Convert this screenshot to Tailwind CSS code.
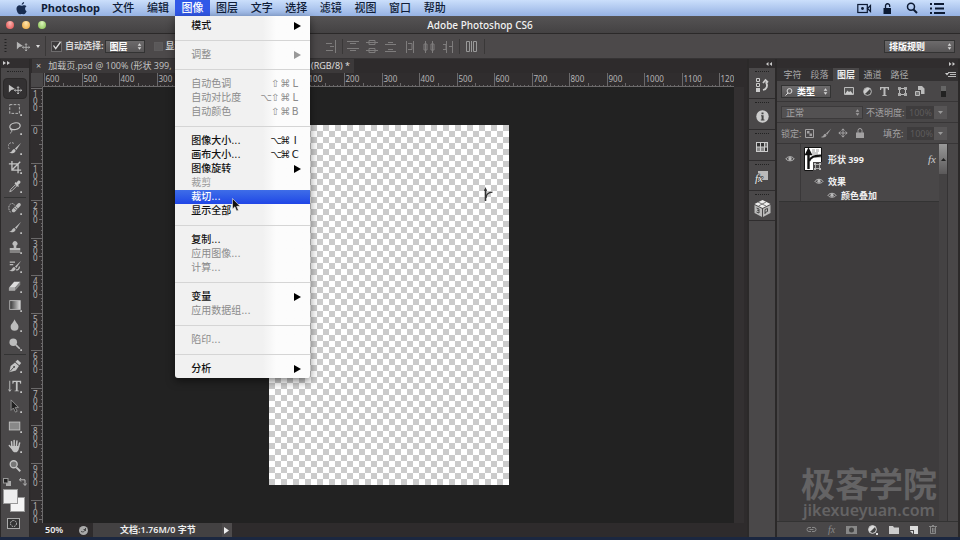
<!DOCTYPE html>
<html lang="zh-CN">
<head>
<meta charset="utf-8">
<meta name="viewport" content="width=device-width, initial-scale=1">
<title>Adobe Photoshop CS6</title>
<script src="https://cdn.jsdelivr.net/npm/@tailwindcss/browser@4"></script>
</head>
<body class="bg-[#222] overflow-hidden">
<svg class="hidden" aria-hidden="true">
  <symbol id="updown" viewBox="0 0 6 10"><path d="M3 1 5.200 4H.8zM3 9 .8 6h4.400z" fill="currentColor"/></symbol>
  <symbol id="eye" viewBox="0 0 12 10"><path d="M1 5.500C3 2 9 2 11 5.500 9 8.500 3 8.500 1 5.500z" fill="none" stroke="currentColor" stroke-width="1.200"/><circle cx="6" cy="5.200" r="2" fill="currentColor"/></symbol>
  <symbol id="move" viewBox="0 0 16 16"><path d="M1 3v9l2.800-2.800L8 8z" fill="currentColor"/><path d="M11.500 5.500v8M7.500 9.500h8M10.300 6.700l1.200-1.400 1.200 1.400M10.300 12.300l1.200 1.400 1.200-1.400M8.700 8.300 7.300 9.500l1.400 1.200M14.300 8.300l1.400 1.200-1.400 1.200" fill="none" stroke="currentColor"/></symbol>
  <symbol id="brush" viewBox="0 0 16 16"><path d="M15 2 8 8.500l1.500 1.800z" fill="currentColor"/><path d="M7.300 9c-2 .2-2.300 1.600-3 2.700-.6 1-1.800 1.400-3.300 1.500 3 1.300 6.500 1 7.800-2.200z" fill="currentColor"/></symbol>
  <symbol id="lens" viewBox="0 0 16 16"><circle cx="6.500" cy="6" r="4" fill="#777" stroke="currentColor" stroke-width="1.500"/><path d="m9.500 9.500 4.500 4.500" stroke="currentColor" stroke-width="2.200"/></symbol>
</svg>

<div class="flex min-h-screen flex-col text-[10px] leading-3 text-[#d8d8d8] [font-family:'Noto_Sans','Noto_Sans_CJK_SC',sans-serif]">

  <!-- System menu bar -->
  <header class="relative z-20 flex h-4 items-center bg-linear-to-b from-[#cbdffb] to-[#96b2e3] text-[11px] leading-4 text-[#101d38]">
    <button class="ml-[15px] flex w-[26px]" aria-label="Apple"><svg class="size-[13px]" viewBox="0 0 14 14" fill="#182c50"><path d="M9.800 0c.1 1.600-1.200 2.900-2.600 2.900C7.100 1.500 8.400.1 9.800 0zM12.500 10c-.6 1.500-1.700 3.300-2.900 3.300-.8 0-1.200-.5-2.200-.5s-1.400.5-2.200.5C3.500 13.300 1.600 10 1.600 7.400c0-2.500 1.600-3.900 3.200-3.900 1 0 1.800.6 2.500.6s1.600-.7 2.800-.7c.8 0 1.700.4 2.300 1.200-2.100 1.200-1.800 4.300.1 5.400z"/></svg></button>
    <button class="w-[65px] text-left font-bold">Photoshop</button>
    <nav class="flex w-[346px] font-medium">
      <button class="flex-1">文件</button>
      <button class="flex-1">编辑</button>
      <div class="relative flex-1">
        <button class="w-full bg-[#3158e8] text-white" aria-expanded="true">图像</button>
        <!-- Open drop-down -->
        <div class="absolute left-0 top-4 flex w-[135px] flex-col rounded-b-[3px] bg-linear-to-r from-[#f1f1f1] from-65% to-[#fcfcfc] to-75% pt-[3px] pb-[2px] text-[10px] leading-[14px] text-[#111] shadow-[0_3px_8px_rgba(0,0,0,0.5)] [font-family:'DejaVu_Sans','Noto_Sans_CJK_SC',sans-serif]" role="menu">
          <button role="menuitem" class="flex h-[14px] items-center justify-between pl-4 pr-[9px] font-medium"><span>模式</span><svg class="h-2 w-[7px]" viewBox="0 0 7 8"><path d="M0 0 7 4 0 8z"/></svg></button>
          <hr class="my-[7px] border-[#d5d5d5]">
          <button role="menuitem" disabled class="flex h-[14px] items-center justify-between pl-4 pr-[9px] font-normal text-[#8b8b8b]"><span>调整</span><svg class="h-2 w-[7px]" viewBox="0 0 7 8" fill="#999"><path d="M0 0 7 4 0 8z"/></svg></button>
          <hr class="my-[7px] border-[#d5d5d5]">
          <button role="menuitem" disabled class="flex h-[14px] items-center justify-between pl-4 pr-[10px] font-normal text-[#8b8b8b]"><span>自动色调</span><kbd class="grid grid-flow-col auto-cols-[10px] font-[inherit]"><span>⇧</span><span>⌘</span><span>L</span></kbd></button>
          <button role="menuitem" disabled class="flex h-[14px] items-center justify-between pl-4 pr-[10px] font-normal text-[#8b8b8b]"><span>自动对比度</span><kbd class="grid grid-flow-col auto-cols-[10px] font-[inherit]"><span>⌥</span><span>⇧</span><span>⌘</span><span>L</span></kbd></button>
          <button role="menuitem" disabled class="flex h-[14px] items-center justify-between pl-4 pr-[10px] font-normal text-[#8b8b8b]"><span>自动颜色</span><kbd class="grid grid-flow-col auto-cols-[10px] font-[inherit]"><span>⇧</span><span>⌘</span><span>B</span></kbd></button>
          <hr class="my-[7px] border-[#d5d5d5]">
          <button role="menuitem" class="flex h-[14px] items-center justify-between pl-4 pr-[10px] font-medium"><span>图像大小...</span><kbd class="grid grid-flow-col auto-cols-[10px] font-[inherit]"><span>⌥</span><span>⌘</span><span>I</span></kbd></button>
          <button role="menuitem" class="flex h-[14px] items-center justify-between pl-4 pr-[10px] font-medium"><span>画布大小...</span><kbd class="grid grid-flow-col auto-cols-[10px] font-[inherit]"><span>⌥</span><span>⌘</span><span>C</span></kbd></button>
          <button role="menuitem" class="flex h-[14px] items-center justify-between pl-4 pr-[9px] font-medium"><span>图像旋转</span><svg class="h-2 w-[7px]" viewBox="0 0 7 8"><path d="M0 0 7 4 0 8z"/></svg></button>
          <button role="menuitem" disabled class="h-[14px] pl-4 text-left font-normal text-[#9b9b9b]">裁剪</button>
          <button role="menuitem" class="h-[14px] bg-linear-to-b from-[#3f6de8] to-[#2145e6] pl-4 text-left text-white">裁切...</button>
          <button role="menuitem" class="h-[14px] pl-4 text-left font-medium">显示全部</button>
          <hr class="my-[7px] border-[#d5d5d5]">
          <button role="menuitem" class="h-[14px] pl-4 text-left font-medium">复制...</button>
          <button role="menuitem" disabled class="h-[14px] pl-4 text-left font-normal text-[#8b8b8b]">应用图像...</button>
          <button role="menuitem" disabled class="h-[14px] pl-4 text-left font-normal text-[#8b8b8b]">计算...</button>
          <hr class="my-[7px] border-[#d5d5d5]">
          <button role="menuitem" class="flex h-[14px] items-center justify-between pl-4 pr-[9px] font-medium"><span>变量</span><svg class="h-2 w-[7px]" viewBox="0 0 7 8"><path d="M0 0 7 4 0 8z"/></svg></button>
          <button role="menuitem" disabled class="h-[14px] pl-4 text-left font-normal text-[#8b8b8b]">应用数据组...</button>
          <hr class="my-[7px] border-[#d5d5d5]">
          <button role="menuitem" disabled class="h-[14px] pl-4 text-left font-normal text-[#8b8b8b]">陷印...</button>
          <hr class="my-[7px] border-[#d5d5d5]">
          <button role="menuitem" class="flex h-[14px] items-center justify-between pl-4 pr-[9px] font-medium"><span>分析</span><svg class="h-2 w-[7px]" viewBox="0 0 7 8"><path d="M0 0 7 4 0 8z"/></svg></button>
          <svg class="absolute left-[57px] top-[182px] h-[14px] w-[9px]" viewBox="0 0 9 14"><path d="M.5.500v10.500l2.400-2.200L4.600 13l1.800-.8L4.700 8.300h3.400z" fill="#111" stroke="#eee" stroke-width=".6"/></svg>
        </div>
      </div>
      <button class="flex-1">图层</button>
      <button class="flex-1">文字</button>
      <button class="flex-1">选择</button>
      <button class="flex-1">滤镜</button>
      <button class="flex-1">视图</button>
      <button class="flex-1">窗口</button>
      <button class="flex-1">帮助</button>
    </nav>
    <div class="ml-auto mr-[14px] flex items-center gap-[11px]">
      <button aria-label="录屏"><svg class="block h-[11px] w-[15px]" viewBox="0 0 15 11" fill="none" stroke="#0c1a33" stroke-width="1.200"><rect x=".8" y="1.500" width="9.500" height="8"/><circle cx="5.500" cy="5.500" r="1.400" fill="#0c1a33" stroke="none"/><path d="m10.500 5.500 3-3v6z"/></svg></button>
      <button aria-label="锁定"><svg class="block h-[11px] w-[9px]" viewBox="0 0 9 11"><rect x=".5" y="5" width="7.500" height="6" fill="#0c1a33"/><path d="M2.500 5V3a2 2 0 0 1 4.200-.3V4" fill="none" stroke="#0c1a33" stroke-width="1.300"/></svg></button>
      <button class="ml-[3px]" aria-label="搜索"><svg class="block size-[12px]" viewBox="0 0 12 12" fill="none" stroke="#0c1a33"><circle cx="5" cy="4.800" r="3.500" stroke-width="1.500"/><path d="m7.500 7.500 3.500 3.500" stroke-width="2"/></svg></button>
      <button aria-label="通知中心"><svg class="block h-[11px] w-[17px]" viewBox="0 0 17 11" fill="#0c1a33"><path d="M1 0h2v2H1zM5 0h10v2H5zM1 4.500h2v2H1zM6 4.500h9v2H6zM1 9h2v2H1zM5 9h11v2H5z"/></svg></button>
    </div>
  </header>

  <!-- Window title -->
  <div class="flex h-[18px] items-center border-b border-[#2b2929] bg-linear-to-b from-[#555354] to-[#444243] px-[6px]">
    <div class="flex flex-1 gap-2">
      <button aria-label="关闭" class="size-[8px] rounded-full bg-radial-[at_50%_25%] from-[#fbb9b4] to-[#e04848]"></button>
      <button aria-label="最小化" class="size-[8px] rounded-full bg-radial-[at_50%_25%] from-[#fde5b0] to-[#eda232]"></button>
      <button aria-label="缩放" class="size-[8px] rounded-full bg-radial-[at_50%_25%] from-[#dff5c0] to-[#7dbd45]"></button>
    </div>
    <h1 class="text-[10px] font-medium text-[#f2f2f2]">Adobe Photoshop CS6</h1>
    <div class="flex-1"></div>
  </div>

  <!-- Options bar -->
  <div class="flex h-[25px] items-center border-b border-[#353334] bg-[#4c494a] text-[9px] font-bold">
    <svg class="ml-1 h-[14px] w-[3px]" viewBox="0 0 3 14"><path d="M1.500 0v14" stroke="#222" stroke-width="2" stroke-dasharray="1 2"/></svg>
    <button class="ml-[9px] flex h-5 items-center gap-[6px] border-r border-[#3a3838] pr-[5px]" aria-label="移动工具"><svg class="size-[14px] text-[#b5b5b5]"><use href="#move"/></svg><svg class="h-[3px] w-[4px]" viewBox="0 0 4 3"><path d="M0 0h4L2 3z" fill="#ddd"/></svg></button>
    <label class="ml-[5px] flex items-center gap-[3px]"><input type="checkbox" checked class="peer sr-only"><svg class="size-[11px]" viewBox="0 0 11 11"><rect x=".5" y=".5" width="10" height="10" fill="#3c3a3b" stroke="#6e6c6d"/><path d="m2.500 4.500 2.200 3.200L9.500 1" fill="none" stroke="#ddd" stroke-width="1.300"/></svg><span>自动选择:</span></label>
    <div class="relative ml-[1px]">
      <select aria-label="自动选择" class="block h-[13px] w-[40px] appearance-none border border-[#333] bg-linear-to-b from-[#6d6b6c] to-[#575556] pl-1 text-[9px] leading-[11px] text-white"><option>图层</option></select>
      <svg class="pointer-events-none absolute right-[3px] top-[2px] h-[9px] w-[5px]"><use href="#updown"/></svg>
    </div>
    <label class="ml-[9px] flex w-[160px] items-center gap-[3px] overflow-hidden whitespace-nowrap"><input type="checkbox" class="size-[9px] shrink-0 appearance-none border border-[#5d5b5c] bg-[#5a5859]">显示变换控件</label>
    <svg class="ml-[12px] h-[15px] w-[160px]" viewBox="323 0 160 15" fill="none" stroke="#7e7c7c">
      <path d="M332.500 1v13M322 4.500h7M322 11.500h8M327 7.500h4"/>
      <path d="M339.500 0v15M456.500 0v15M481.500 0v15" stroke="#3a3838"/>
      <path d="M344 2.500h12M347 4.500h6M344 9.500h12M347 11.500h6M363 3.500h12M366 1.500h6v4h-6zM363 11.500h12M366 9.500h6v4h-6zM382 5.500h11M385 3.500h5M382 12.500h11M385 10.500h5"/>
      <path d="M403.500 2v12M405 4.500h4v6h-4M410.500 2v12M422.500 2v12M421 5h3v6h-3zM429.500 2v12M428 5h3v6h-3zM443.500 2v12M440 5.500h3v5h-3M449.500 2v12M446 7.500h3"/>
      <path d="M463.500 2.500h3v10h-3zM468.500 2v11M470.500 2.500h3v10h-3z" stroke="#999"/>
    </svg>
    <div class="relative ml-auto mr-[5px]">
      <select aria-label="工作区" class="block h-[13px] w-[71px] appearance-none border border-[#333] bg-linear-to-b from-[#6d6b6c] to-[#575556] pl-1 text-[9px] leading-[11px] text-white"><option>排版规则</option></select>
      <svg class="pointer-events-none absolute right-[3px] top-[2px] h-[9px] w-[5px]"><use href="#updown"/></svg>
    </div>
  </div>

  <main class="flex min-h-0 flex-1 bg-[#2e2b2c]">
    <!-- Tool palette -->
    <aside class="flex w-[30px] flex-col border-x border-[#2b2929] bg-[#4a4849]">
      <div class="h-[9px] bg-[#312e2f] pl-[2px] pt-[2px]"><svg class="h-1 w-[7px]" viewBox="0 0 7 4" fill="#ccc"><path d="M0 0l3 2-3 2zM4 0l3 2-3 2z"/></svg></div>
      <div class="mx-[6px] mt-[3px] mb-[6px] border-t border-dotted border-[#222]"></div>
      <div class="flex h-[118px] flex-col text-[#c4c4c4]">
        <button aria-label="移动" class="mx-[2px] flex flex-1 items-center justify-center rounded-sm border border-[#2b2929] bg-[#333132]"><svg class="size-[14px]"><use href="#move"/></svg></button>
        <button aria-label="选框" class="flex flex-1 items-center justify-center"><svg class="size-[14px]" viewBox="0 0 16 16"><rect x="2" y="3" width="11" height="10" fill="none" stroke="currentColor" stroke-dasharray="3 1.500"/><path d="M14 14h2v2h-2z" fill="currentColor"/></svg></button>
        <button aria-label="套索" class="flex flex-1 items-center justify-center"><svg class="size-[14px]" viewBox="0 0 16 16"><ellipse cx="8" cy="6" rx="6" ry="3.800" transform="rotate(-12 8 6)" fill="none" stroke="currentColor" stroke-width="1.400"/><path d="M3.500 8.500c-1.500 1-.5 2.500 1 1.800M4 10c1 1.500 0 3-1.500 4" fill="none" stroke="currentColor"/><path d="M14 14h2v2h-2z" fill="currentColor"/></svg></button>
        <button aria-label="快速选择" class="flex flex-1 items-center justify-center"><svg class="size-[14px]" viewBox="0 0 16 16"><use href="#brush"/><path d="M1.500 9a4 4 0 0 1 5.500-6" fill="none" stroke="currentColor" stroke-dasharray="2 1.300"/><path d="M14 14h2v2h-2z" fill="currentColor"/></svg></button>
        <button aria-label="裁剪" class="flex flex-1 items-center justify-center"><svg class="size-[14px]" viewBox="0 0 16 16"><path d="M4.500 1v10.500H15M1 4.500h10.500V15M4.500 11.500 14 2" fill="none" stroke="currentColor" stroke-width="1.500"/><path d="M14 14h2v2h-2z" fill="currentColor"/></svg></button>
        <button aria-label="吸管" class="flex flex-1 items-center justify-center"><svg class="size-[14px]" viewBox="0 0 16 16"><path d="M2 14.500 3 12l5.500-5.500 1.500 1.500L4.500 13.500z" fill="none" stroke="currentColor"/><path d="m7.500 5 4 4 1-1-1-1.200L14 4.500c1.200-1.700-1.300-3.500-2.700-2.200L9.500 4.200 8.500 3.500z" fill="currentColor"/><path d="M14 14h2v2h-2z" fill="currentColor"/></svg></button>
      </div>
      <hr class="mx-[3px] mt-[1px] border-[#333]">
      <div class="flex h-[156px] flex-col text-[#bcbcbc]">
        <button aria-label="修复画笔" class="flex flex-1 items-center justify-center"><svg class="size-[14px]" viewBox="0 0 16 16"><path d="m5 9.500 6-6.500c2-2 5 .8 3 2.800l-6 6.400c-2 2-5-.6-3-2.700z" fill="currentColor"/><path d="m8.500 6 3 3M7 8l3 2.500" stroke="#555"/><path d="M3 13C0 10 0 4 4 3c2-.5 3 .5 3.500 2" fill="none" stroke="currentColor" stroke-dasharray="2 1"/><path d="M14 14h2v2h-2z" fill="currentColor"/></svg></button>
        <button aria-label="画笔" class="flex flex-1 items-center justify-center"><svg class="size-[14px]" viewBox="0 0 16 16"><use href="#brush"/><path d="M14 14h2v2h-2z" fill="currentColor"/></svg></button>
        <button aria-label="图章" class="flex flex-1 items-center justify-center"><svg class="size-[14px]" viewBox="0 0 16 16" fill="currentColor"><path d="M6.500 9V6.500a2.800 2.800 0 1 1 3 0V9H14v3H2V9zM2 13h12v1.300H2zM14 14h2v2h-2z"/></svg></button>
        <button aria-label="历史记录画笔" class="flex flex-1 items-center justify-center"><svg class="size-[14px]" viewBox="0 0 16 16"><use href="#brush"/><path d="M2 3.500h6M2 6.500h4M9 12.500c2.500 0 4-1.500 4-4" fill="none" stroke="currentColor" stroke-width="1.500"/><path d="M14 14h2v2h-2z" fill="currentColor"/></svg></button>
        <button aria-label="橡皮擦" class="flex flex-1 items-center justify-center"><svg class="size-[14px]" viewBox="0 0 16 16"><path d="M1 10 7 3h7l-6 7z" fill="#ddd"/><path d="M1 10h7v3.500H1z" fill="#aaa"/><path d="m8 10 6-7v3.500l-6 7z" fill="#888"/><path d="M14 14h2v2h-2z" fill="currentColor"/></svg></button>
        <button aria-label="渐变" class="flex flex-1 items-center justify-center"><svg class="size-[14px]" viewBox="0 0 16 16"><defs><linearGradient id="grad"><stop stop-color="#333"/><stop offset="1" stop-color="#ddd"/></linearGradient></defs><rect x="2" y="3" width="12" height="10" fill="url(#grad)" stroke="currentColor"/><path d="M14 14h2v2h-2z" fill="currentColor"/></svg></button>
        <button aria-label="模糊" class="flex flex-1 items-center justify-center"><svg class="size-[14px]" viewBox="0 0 16 16" fill="currentColor"><path d="M7.500 1.500C8.500 5 12 7 12 10a4.500 4.500 0 0 1-9 0c0-3 3.500-5 4.500-8.500zM14 14h2v2h-2z"/></svg></button>
        <button aria-label="减淡" class="flex flex-1 items-center justify-center"><svg class="size-[14px]" viewBox="0 0 16 16"><circle cx="6" cy="6" r="4.300" fill="currentColor"/><path d="m9 9 4.500 4.500" stroke="currentColor" stroke-width="1.800"/><path d="M14 14h2v2h-2z" fill="currentColor"/></svg></button>
      </div>
      <hr class="mx-[3px] mb-[1px] border-[#333]">
      <div class="flex h-[120px] flex-col text-[#c4c4c4]">
        <button aria-label="钢笔" class="flex flex-1 items-center justify-center"><svg class="size-[14px]" viewBox="0 0 16 16"><path d="M1.500 15 3 8l5-4 4.500 4-3.500 5z" fill="currentColor"/><path d="M8.500 3 11 .8 15 4.500 13 7.200z" fill="currentColor"/><path d="m2 14.500 4.500-5" stroke="#444"/><circle cx="7" cy="9" r="1.100" fill="#444"/><path d="M14 14h2v2h-2z" fill="currentColor"/></svg></button>
        <button aria-label="直排文字" class="flex flex-1 items-center justify-center"><svg class="size-[14px]" viewBox="0 0 16 16"><path d="M2 2v12M.5 12 2 14l1.500-2" fill="none" stroke="currentColor"/><path d="M5 2h10v3.500h-1L13.300 3.300H11V13l1.500.3V14h-5v-.7L9 13V3.300H6.700L6 5.500H5zM14 14h2v2h-2z" fill="currentColor"/></svg></button>
        <button aria-label="路径选择" class="flex flex-1 items-center justify-center"><svg class="size-[14px]" viewBox="0 0 16 16"><path d="M3.500 1v12l2.700-2.700L8.500 15l2-1-2.300-4.400H12z" fill="#222" stroke="#999"/><path d="M14 14h2v2h-2z" fill="currentColor"/></svg></button>
        <button aria-label="矩形" class="flex flex-1 items-center justify-center"><svg class="size-[14px]" viewBox="0 0 16 16"><rect x="1.500" y="3.500" width="12" height="9" fill="#888" stroke="currentColor"/><path d="M14 14h2v2h-2z" fill="currentColor"/></svg></button>
        <button aria-label="抓手" class="flex flex-1 items-center justify-center"><svg class="size-[14px]" viewBox="0 0 16 16"><path d="M4.500 9 4 3M7 8V1.800M9.600 8l.6-5.700M12 9.500l1.300-5M4.500 11 1.500 7.500" stroke="currentColor" stroke-width="1.700" stroke-linecap="round"/><path d="M3.800 8h9c0 3-1 6.500-3 7H7C5.500 14.500 3.500 12 3.800 8zM14 14h2v2h-2z" fill="currentColor"/></svg></button>
        <button aria-label="缩放工具" class="flex flex-1 items-center justify-center"><svg class="size-[14px]"><use href="#lens"/></svg></button>
      </div>
      <div class="mt-[1px] flex h-[9px] items-center justify-between px-[2px]">
        <button aria-label="默认颜色"><svg class="block size-2" viewBox="0 0 8 8"><rect x="3" y="3" width="5" height="5" fill="#aaa"/><rect x=".5" y=".5" width="4.500" height="4.500" fill="#222" stroke="#999"/></svg></button>
        <button aria-label="切换颜色"><svg class="block size-2" viewBox="0 0 8 8" fill="none" stroke="#bbb"><path d="M2 0 .5 1.800 2 3.500M.8 1.800H6v5M4.300 5.500 6 7.500l1.600-2"/></svg></button>
      </div>
      <div class="ml-[2px] mt-[3px] grid h-[23px] w-[22px] grid-cols-3 grid-rows-3">
        <button aria-label="背景色" class="col-span-2 col-start-2 row-span-2 row-start-2 border border-[#999] bg-[#f4f4f4]"></button>
        <button aria-label="前景色" class="col-span-2 col-start-1 row-span-2 row-start-1 border border-[#999] bg-[#eee]"></button>
      </div>
      <button aria-label="快速蒙版" class="mt-[6px] ml-[6px] w-[13px]"><svg class="block h-[11px] w-[13px]" viewBox="0 0 13 11"><rect x=".5" y=".5" width="12" height="10" fill="#333" stroke="#aaa"/><circle cx="6.500" cy="5.500" r="3" fill="none" stroke="#ccc" stroke-dasharray="1.500 1"/></svg></button>
    </aside>

    <!-- Document window -->
    <section class="flex min-w-0 flex-1 flex-col">
      <div class="flex h-[14px] text-[9px] leading-[14px] text-[#c4c4c4] [font-family:'Open_Sans','Noto_Sans_CJK_SC',sans-serif]">
        <div class="ml-[2px] flex w-[322px] items-center bg-[#3c393a] pl-1 pr-1">
          <button aria-label="关闭文档" class="mr-[7px]">×</button>
          <span class="whitespace-nowrap">加载页.psd @ 100% (形状 399,</span>
          <span class="ml-auto whitespace-nowrap font-medium text-[#e2e2e2]">(RGB/8) *</span>
        </div>
      </div>
      <!-- Rulers share their centre with the canvas, so marks are placed from 50% -->
      <div class="flex h-[14px]">
        <div class="ml-[1px] w-3 bg-[#4a4849]"></div>
        <svg class="h-full min-w-0 flex-1 bg-[#302d2e]"><svg id="ruler-x" x="50%" overflow="visible"></svg></svg>
        <div class="w-[13px]"></div>
      </div>
      <div class="flex min-h-0 flex-1">
        <svg class="ml-[1px] h-full w-3 bg-[#302d2e]"><svg id="ruler-y" y="50%" overflow="visible"></svg></svg>
        <div class="flex min-w-0 flex-1 items-center justify-center bg-[#222]">
          <div class="flex h-[360px] w-[240px] justify-end bg-[conic-gradient(#cbcbcb_25%,#fff_0_50%,#cbcbcb_0_75%,#fff_0)] bg-[length:12px_12px]">
            <svg class="mr-4 mt-[62px] h-[15px] w-[9px]" viewBox="0 0 9 15" fill="none" stroke="#333"><path d="M1.500 2v12" stroke-width="1.600"/><path d="m0 4 1.500-4L3 4z" fill="#333" stroke="none"/><path d="M2 11c0-3.500 2.500-5.500 6.500-5.800" stroke-width="1.300"/></svg>
          </div>
        </div>
        <div class="w-[10px] bg-[#333031]"></div>
        <div class="w-[3px]"></div>
      </div>
      <footer class="flex h-[14px] items-center text-[9px] font-semibold leading-[14px] text-[#eee]">
        <span class="ml-[15px] w-[34px]">50%</span>
        <button aria-label="导出" class="w-[14px]"><svg class="block size-[9px]" viewBox="0 0 9 9"><circle cx="4.500" cy="4.500" r="4.500" fill="#aaa"/><path d="M2 5.500c2 1 4 0 4-2H4.500M6.500 2v3" stroke="#444" fill="none"/></svg></button>
        <span class="flex-none bg-[#434142] pl-[27px] pr-[26px]">文档:1.76M/0 字节</span>
        <button aria-label="状态菜单" class="flex h-full w-[10px] items-center justify-center bg-[#4e4b4c]"><svg class="h-[7px] w-[5px]" viewBox="0 0 5 7"><path d="m0 0 5 3.500L0 7z" fill="#eee"/></svg></button>
      </footer>
    </section>

    <!-- Collapsed panel dock -->
    <aside class="flex w-[30px] flex-col border-x-2 border-[#2b2929] bg-[#4a4849]">
      <div class="flex h-[9px] justify-end bg-[#302d2e] pr-[3px] pt-[3px]"><svg class="h-1 w-[6px]" viewBox="0 0 6 4" fill="#ccc"><path d="M2.500 0v4L0 2zM6 0v4L3.500 2z"/></svg></div>
      <button aria-label="历史记录" class="flex h-[31px] flex-col items-center border-b border-[#2f2d2e]"><span class="mt-[3px] mb-[5px] w-[14px] border-t border-dotted border-[#222]"></span><svg class="size-4" viewBox="0 0 16 16" fill="none" stroke="#ccc"><path d="M2.500 1.500h3v3h-3zM2.500 6.500h3v3h-3z"/><path d="M2 11h4v4H2z" fill="#ccc" stroke="none"/><path d="M9 13c4-1 5-4 3-8M9 6l2.500-3L14 5.500" stroke-width="1.800"/></svg></button>
      <button aria-label="信息" class="flex h-[31px] flex-col items-center border-b border-[#2f2d2e]"><span class="mt-[3px] mb-[7px] w-[14px] border-t border-dotted border-[#222]"></span><svg class="size-[13px]" viewBox="0 0 13 13"><circle cx="6.500" cy="6.500" r="6.200" fill="#ccc"/><path d="M5.500 2.500h2v1.700h-2zM5 5.300h2.600v4.200h.9v1H4.800v-1h.8V6.300H5z" fill="#444"/></svg></button>
      <button aria-label="色板" class="flex h-[31px] flex-col items-center border-b border-[#2f2d2e]"><span class="mt-[3px] mb-[8px] w-[14px] border-t border-dotted border-[#222]"></span><svg class="h-[10px] w-3" viewBox="0 0 12 10"><path d="M0 0h12v10H0z" fill="#ccc"/><path d="M1 1h3v3.500H1zM5 1h3v3.500H5zM9 5.500h2V9H9z" fill="#333"/><path d="M9 1h2v3.500H9z" fill="#777"/><path d="M1 5.500h3V9H1zM5 5.500h3V9H5z" fill="#888"/></svg></button>
      <button aria-label="样式" class="flex h-[30px] flex-col items-center border-b border-[#2f2d2e]"><span class="mt-[3px] mb-[5px] w-[14px] border-t border-dotted border-[#222]"></span><svg class="h-[14px] w-3 overflow-visible" viewBox="0 0 12 14"><path d="M2 1h10v9H2z" fill="#bbb"/><text x="-1" y="12" font-size="11" font-style="italic" fill="#eee" stroke="#444" stroke-width="1.500" paint-order="stroke" font-family="Liberation Serif">fx</text></svg></button>
      <button aria-label="3D" class="flex h-[30px] flex-col items-center border-b border-[#2f2d2e]"><span class="mt-[3px] mb-[5px] w-[14px] border-t border-dotted border-[#222]"></span><svg class="size-[17px]" viewBox="0 0 17 17"><path d="M8.500 0 16.500 4 8.500 8 .5 4z" fill="#eee"/><path d="M.5 5 8 8.700V17L.5 13zM16.500 5 9 8.700V17l7.500-4z" fill="#bbb"/><path d="m4 2 8 4M12 2 4.500 6" stroke="#777"/><path d="m2.500 8 2.500 1v4l-2.500-1M3 10l2 .8M11 14V9.500l2.500-1v3L11 12.500" stroke="#444" fill="none"/></svg></button>
    </aside>

    <!-- Layers panel -->
    <aside class="flex w-[183px] flex-col border-r-2 border-[#2b2929] bg-[#494748] text-[9px] leading-[13px]">
      <div class="flex h-[9px] justify-end bg-[#302d2e] pr-[3px] pt-[3px]"><svg class="h-1 w-[6px]" viewBox="0 0 6 4" fill="#ccc"><path d="M0 0v4l2.500-2zM3.500 0v4L6 2z"/></svg></div>
      <div class="flex h-[13px] bg-[#333132] pl-[2px] text-[#aaa]">
        <button class="w-[27px] text-center">字符</button>
        <button class="w-[27px] text-center">段落</button>
        <button class="w-[26px] bg-[#494748] text-center font-bold text-[#eee]">图层</button>
        <button class="w-[27px] text-center">通道</button>
        <button class="w-[27px] text-center">路径</button>
        <button aria-label="面板菜单" class="ml-auto mr-[2px]"><svg class="block h-[7px] w-[11px]" viewBox="0 0 11 7" stroke="#bbb"><path d="M3 1.500h8M5 3.500h6M3 5.500h8"/><path d="M0 2h4L2 4.500z" fill="#ccc" stroke="none"/></svg></button>
      </div>
      <div class="flex h-[21px] items-center border-b border-[#383637] pl-1 pr-[12px]">
        <div class="relative w-[50px]">
          <select aria-label="过滤类型" class="block h-[13px] w-full appearance-none border border-[#333] bg-linear-to-b from-[#6d6b6c] to-[#575556] pl-[15px] text-[9px] font-bold leading-[11px] text-white"><option>类型</option></select>
          <svg class="pointer-events-none absolute left-1 top-[3px] size-2" viewBox="0 0 8 8" fill="none" stroke="#ddd"><circle cx="4.500" cy="3" r="2.400"/><path d="M3 5 .5 7.500"/></svg>
          <svg class="pointer-events-none absolute right-[3px] top-[2px] h-[9px] w-[5px]"><use href="#updown"/></svg>
        </div>
        <div class="ml-[13px] flex flex-1 items-center justify-between">
          <button aria-label="像素图层"><svg class="block size-[10px]" viewBox="0 0 10 10"><path d="M.5 1.500h9v7h-9z" fill="#555" stroke="#bbb"/><path d="m1 8 2.500-3.500L5 6l1.500-1L9 8z" fill="#ccc"/></svg></button>
          <button aria-label="调整图层"><svg class="block size-[9px]" viewBox="0 0 9 9"><circle cx="4.500" cy="4.500" r="3.900" fill="#444" stroke="#bbb"/><path d="M1.700 7.300A4 4 0 0 1 7.300 1.700z" fill="#ccc"/></svg></button>
          <button aria-label="文字图层"><svg class="block size-[9px]" viewBox="0 0 9 9" fill="#bbb"><path d="M0 0h9v3H8L7.500 1.300h-2V8l1.200.3V9H2.300v-.7L3.500 8V1.300h-2L1 3H0z"/></svg></button>
          <button aria-label="形状图层"><svg class="block size-[9px]" viewBox="0 0 9 9" fill="none" stroke="#bbb"><path d="M1.500 1.500h6v6h-6z"/><path d="M0 0h3v3H0zM6 0h3v3H6zM0 6h3v3H0zM6 6h3v3H6z" fill="#aaa" stroke="none"/></svg></button>
          <button aria-label="智能对象"><svg class="block size-[10px]" viewBox="0 0 10 10"><path d="M3 0h4l2.500 2.500V8H6V4H3z" fill="#bbb"/><path d="M.5 5.500h4v4h-4z" fill="#777" stroke="#bbb"/></svg></button>
          <button aria-label="过滤开关" class="ml-[7px]"><svg class="block h-[11px] w-[5px]" viewBox="0 0 5 11"><path d="M0 0h5v11H0z" fill="#222"/><path d="M0 0h5v5H0z" fill="#666"/></svg></button>
        </div>
      </div>
      <div class="flex h-[21px] items-center border-b border-[#383637] pl-1 pr-[11px] text-[#a3a1a2]">
        <div class="relative w-[82px]">
          <select aria-label="混合模式" disabled class="block h-[13px] w-full appearance-none border border-[#3c3a3b] bg-[#535152] pl-1 text-[9px] leading-[11px] opacity-100 text-[#a3a1a2]"><option>正常</option></select>
          <svg class="pointer-events-none absolute right-[3px] top-[2px] h-[9px] w-[5px]"><use href="#updown"/></svg>
        </div>
        <label for="opacity" class="ml-[3px] w-[40px] shrink-0 whitespace-nowrap">不透明度:</label>
        <input id="opacity" disabled value="100%" class="h-[13px] w-0 flex-1 bg-[#3e3c3d] pl-[3px] text-[#5d5b5c]">
        <button aria-label="不透明度选项" class="flex h-[13px] w-[13px] items-center justify-center bg-[#575556]"><svg class="h-[3px] w-[5px]" viewBox="0 0 5 3"><path d="M0 0h5L2.500 3z" fill="#999"/></svg></button>
      </div>
      <div class="flex h-[21px] items-center border-b border-[#383637] pl-1 pr-[11px] text-[#a3a1a2]">
        <span class="w-6">锁定:</span>
        <button aria-label="锁定透明像素"><svg class="block size-[9px]" viewBox="0 0 9 9"><path d="M.5.500h8v8h-8z" fill="none" stroke="currentColor"/><path d="M2 2h2.500v2.500H2zM4.500 4.500H7V7H4.500z" fill="currentColor"/></svg></button>
        <button aria-label="锁定图像像素" class="ml-[6px]"><svg class="block size-[12px]"><use href="#brush"/></svg></button>
        <button aria-label="锁定位置" class="ml-[6px]"><svg class="block size-[10px]" viewBox="0 0 10 10" fill="none" stroke="currentColor"><path d="M5 1v8M1 5h8M3.500 2.500 5 .8l1.500 1.700M3.500 7.500 5 9.200l1.500-1.700M2.500 3.500.8 5l1.700 1.500M7.500 3.500 9.200 5 7.500 6.500"/></svg></button>
        <button aria-label="全部锁定" class="ml-[8px]"><svg class="block h-[10px] w-2" viewBox="0 0 8 10"><path d="M0 4.500h8V10H0z" fill="currentColor"/><path d="M2 5V2.500a2 2 0 0 1 4 0V5" fill="none" stroke="currentColor"/></svg></button>
        <label for="fill" class="ml-auto w-[24px]">填充:</label>
        <input id="fill" disabled value="100%" class="h-[13px] w-[27px] bg-[#3e3c3d] pl-[3px] text-[#5d5b5c]">
        <button aria-label="填充选项" class="flex h-[13px] w-[13px] items-center justify-center bg-[#575556]"><svg class="h-[3px] w-[5px]" viewBox="0 0 5 3"><path d="M0 0h5L2.500 3z" fill="#999"/></svg></button>
      </div>
      <div class="ml-[2px] mr-[10px] flex min-h-0 flex-1 border-r border-[#353334] bg-[#3e3c3d]">
        <div class="flex min-w-0 flex-1 flex-col font-bold text-[#f0f0f0]">
          <div class="flex h-[58px] border-b border-[#333] bg-[#494748]">
            <button aria-label="显示图层" class="w-[22px] border-r border-[#3a3839] pb-7"><svg class="mx-auto block h-[9px] w-[10px] text-[#bbb]"><use href="#eye"/></svg></button>
            <div class="min-w-0 flex-1">
              <div class="flex h-[30px] items-center pl-[3px] pr-[3px]">
                <svg class="h-6 w-[18px]" viewBox="0 0 18 24"><path d="M.5.500h17v23H.5z" fill="#fff" stroke="#111"/><path d="M8 2h3v3h3v3h3v3h-6V8H8zM12 2h3v3h-3z" fill="#ccc"/><path d="M4.500 22V7M2.500 7l2-4 2 4z" stroke="#111" stroke-width="2.400" fill="#111"/><path d="M5 14C7 9 11 9 17 8.500" fill="none" stroke="#111" stroke-width="2.200"/><path d="M9 15h9v9H9z" fill="#494748"/><path d="M11.500 17.500h4v4h-4z" fill="none" stroke="#aaa"/><path d="M10 16h2v2h-2zM15 16h2v2h-2zM10 21h2v2h-2zM15 21h2v2h-2z" fill="#bbb"/></svg>
                <span class="ml-[6px]">形状 399</span>
                <span class="ml-auto text-[11px] font-normal italic text-[#ccc] [font-family:'Liberation_Serif',serif]">fx</span>
              </div>
              <div class="flex h-[14px] items-center gap-1 pl-[13px]"><button aria-label="显示效果"><svg class="block h-2 w-[10px] text-[#bbb]"><use href="#eye"/></svg></button>效果</div>
              <div class="flex h-[14px] items-center gap-1 pl-[26px]"><button aria-label="显示颜色叠加"><svg class="block h-2 w-[10px] text-[#bbb]"><use href="#eye"/></svg></button>颜色叠加</div>
            </div>
          </div>
          <!-- Watermark -->
          <div class="mt-auto flex flex-col items-center self-end text-[#646364]">
            <div class="mr-[2px] text-[34px] font-bold leading-[34px] whitespace-nowrap">极客学院</div>
            <div class="mr-[2px] mb-[2px] text-[16px] font-semibold leading-[18px]">jikexueyuan.com</div>
          </div>
        </div>
        <div class="w-2 bg-[#444243]"><button aria-label="向上滚动" class="flex h-[30px] w-full items-center justify-center bg-linear-to-b from-[#999] to-[#5b595a]"><svg class="h-[3px] w-[5px]" viewBox="0 0 5 3"><path d="M0 3h5L2.500 0z" fill="#222"/></svg></button></div>
      </div>
      <div class="flex h-4 items-center gap-[11px] border-t border-[#333] pl-[29px] text-[#aaa]">
        <button aria-label="链接图层"><svg class="block h-[7px] w-[11px]" viewBox="0 0 11 7" fill="none" stroke="#888"><path d="M5 1.500H3a2 2 0 0 0 0 4h2M6 1.500h2a2 2 0 0 1 0 4H6M3.500 3.500h4"/></svg></button>
        <button aria-label="图层样式" class="text-[10px] italic text-[#888] [font-family:'Liberation_Serif',serif]">fx</button>
        <button aria-label="蒙版"><svg class="block h-2 w-[11px]" viewBox="0 0 11 8"><path d="M0 0h11v8H0z" fill="#888"/><circle cx="5.500" cy="4" r="2.500" fill="#444"/></svg></button>
        <button aria-label="新建调整图层"><svg class="block size-[10px]" viewBox="0 0 10 10"><circle cx="4.500" cy="4.500" r="3.900" fill="#444" stroke="#ddd"/><path d="M1.700 7.300A4 4 0 0 1 7.300 1.700z" fill="#ddd"/><path d="M8 8h2v2H8z" fill="#ddd"/></svg></button>
        <button aria-label="新建组"><svg class="block h-2 w-[10px]" viewBox="0 0 10 8"><path d="M0 0h4l1 1.500h5V8H0z" fill="#ccc"/></svg></button>
        <button aria-label="新建图层"><svg class="block h-2 w-2" viewBox="0 0 8 8"><path d="M0 0h8v8H4V4H0z" fill="#ddd"/><path d="M0 5h3v3z" fill="#ddd"/></svg></button>
        <button aria-label="删除图层"><svg class="block h-[9px] w-2" viewBox="0 0 8 9" fill="none" stroke="#888"><path d="M0 1.500h8M3 .5h2M1.500 2v6.500h5V2M3.500 3v4.500M5 3v4.500"/></svg></button>
      </div>
    </aside>
  </main>
  <div class="h-[3px] bg-[#1b2740]"></div>
</div>

<script>
  // Rulers: 100 document units take 37.5 px; zero sits at the edge of the page.
  const NS = 'http://www.w3.org/2000/svg';
  const STEP = 37.5;
  function add(svg, tag, attrs, text) {
    const el = document.createElementNS(NS, tag);
    for (const k in attrs) el.setAttribute(k, attrs[k]);
    if (text) el.textContent = text;
    svg.appendChild(el);
  }
  function drawRuler(id, horizontal, zero, first, last) {
    const svg = document.getElementById(id);
    const depth = horizontal ? 14 : 12;
    let d = horizontal ? `M-2000 ${depth - 0.5}H2000` : `M${depth - 0.5} -2000V2000`;
    for (let i = first * 10; i < last * 10 + 10; i++) {
      const p = Math.round(zero + i * STEP / 10) + 0.5;
      const size = i % 10 === 0 ? depth : i % 5 === 0 ? 4 : 2;
      d += horizontal ? `M${p} ${depth - size}V${depth}` : `M${depth - size} ${p}H${depth}`;
    }
    add(svg, 'path', { d, stroke: '#6b696a', fill: 'none', 'shape-rendering': 'crispEdges' });
    for (let n = first; n <= last; n++) {
      const p = Math.round(zero + n * STEP);
      const label = String(Math.abs(n * 100));
      const font = { 'font-size': 8, fill: '#b5b3b4' };
      if (horizontal) add(svg, 'text', { x: p + 2, y: 9, ...font }, label);
      else [...label].forEach((c, i) => add(svg, 'text', { x: 2, y: p + 9 + i * 7, ...font }, c));
    }
  }
  drawRuler('ruler-x', true, -120, -6, 12);
  drawRuler('ruler-y', false, -180, -1, 10);
</script>
</body>
</html>
